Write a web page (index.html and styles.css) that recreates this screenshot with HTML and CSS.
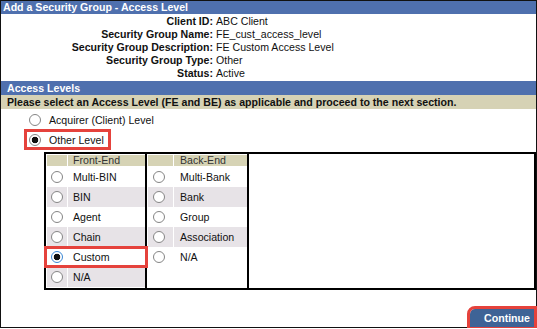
FILE: index.html
```html
<!DOCTYPE html>
<html>

<head>
	<meta charset='utf-8'>
	<title>Add a Security Group - Access Level</title>
	<meta name='viewport' content='width=device-width, initial-scale=1'>
	<link rel="stylesheet" href="styles.css">
</head>

<body>
	<div class="page">
		<div class="title">Add a Security Group - Access Level</div>

		<div class="details">
			<span class="label">Client ID:</span><span>ABC Client</span>
			<span class="label">Security Group Name:</span><span>FE_cust_access_level</span>
			<span class="label">Security Group Description:</span><span>FE Custom Access Level</span>
			<span class="label">Security Group Type:</span><span>Other</span>
			<span class="label">Status:</span><span>Active</span>
		</div>

		<div class="section">Access Levels</div>
		<div class="note">Please select an Access Level (FE and BE) as applicable and proceed to the next section.</div>

		<div class="levels">
			<label class="level"><input type="radio" name="level">Acquirer (Client) Level</label>
			<label class="level marked"><input type="radio" name="level" checked>Other Level</label>
		</div>

		<div class="matrix">
			<div class="side front">
				<div class="head"><span class="pick"></span><span class="name">Front-End</span></div>
				<label class="row"><span class="pick"><input type="radio" name="fe"></span><span class="name">Multi-BIN</span></label>
				<label class="row"><span class="pick"><input type="radio" name="fe"></span><span class="name">BIN</span></label>
				<label class="row"><span class="pick"><input type="radio" name="fe"></span><span class="name">Agent</span></label>
				<label class="row"><span class="pick"><input type="radio" name="fe"></span><span class="name">Chain</span></label>
				<label class="row marked focus"><span class="pick"><input type="radio" name="fe" checked></span><span class="name">Custom</span></label>
				<label class="row"><span class="pick"><input type="radio" name="fe"></span><span class="name">N/A</span></label>
			</div>
			<div class="side back">
				<div class="head"><span class="pick"></span><span class="name">Back-End</span></div>
				<label class="row"><span class="pick"><input type="radio" name="be"></span><span class="name">Multi-Bank</span></label>
				<label class="row"><span class="pick"><input type="radio" name="be"></span><span class="name">Bank</span></label>
				<label class="row"><span class="pick"><input type="radio" name="be"></span><span class="name">Group</span></label>
				<label class="row"><span class="pick"><input type="radio" name="be"></span><span class="name">Association</span></label>
				<label class="row"><span class="pick"><input type="radio" name="be"></span><span class="name">N/A</span></label>
			</div>
		</div>

		<div class="actions">
			<button class="continue" type="button">Continue</button>
		</div>
	</div>
</body>

</html>
```

FILE: styles.css
```css
* {
	box-sizing: border-box;
}

body {
	margin: 0;
	background: #fff;
	color: #111;
	font-family: "Liberation Sans", Arial, sans-serif;
	font-size: 10.6px;
}

.page {
	width: 537px;
	height: 328px;
	border: 1px solid #111;
}

.title,
.section {
	background: #4f70ae;
	color: #fff;
	font-weight: bold;
}

.title {
	height: 13px;
	line-height: 13px;
	padding-left: 2px;
}

.details {
	display: grid;
	grid-template-columns: 212px auto;
	column-gap: 3px;
	padding-top: 1px;
	line-height: 13px;
}

.details .label {
	text-align: right;
	font-weight: bold;
}

.section {
	margin-top: 1px;
	height: 14px;
	line-height: 14px;
	padding-left: 6px;
}

.note {
	height: 14px;
	line-height: 14px;
	padding-left: 6px;
	background: #d6d2b5;
	font-weight: bold;
}

/* radios */
input[type=radio] {
	appearance: none;
	-webkit-appearance: none;
	flex: none;
	width: 12px;
	height: 12px;
	margin: 0;
	border: 1px solid #858585;
	border-radius: 50%;
	background: #fff;
}

input[type=radio]:checked {
	background: radial-gradient(circle, #111 0 3px, #fff 3.6px);
}

.focus input[type=radio] {
	border-color: #3a86d4;
}

.levels {
	display: flex;
	flex-direction: column;
	align-items: flex-start;
	padding-top: 1px;
}

.level {
	display: flex;
	align-items: center;
	height: 19px;
	padding-left: 28px;
}

.level input {
	margin-right: 8px;
}

.level.marked {
	height: 21px;
	margin-left: 23px;
	padding: 0 4px 0 2px;
	border: 3px solid #e5423c;
}

/* front-end / back-end grid */
.matrix {
	display: flex;
	height: 138px;
	margin: 2px 0 0 43px;
	border: 2px solid #000;
}

.side {
	display: flex;
	flex-direction: column;
	padding: 1px 0 0 1px;
	border-right: 2px solid #000;
}

.front {
	width: 101px;
}

.back {
	width: 102px;
}

.head,
.row {
	display: flex;
	gap: 1px;
}

.head {
	height: 11px;
	line-height: 11px;
	margin-bottom: 1px;
	color: #333;
}

.head span {
	background: #d6d3b5;
}

.row {
	height: 20px;
}

.row:nth-child(odd) span {
	background: #e7e3e7;
}

.pick {
	display: flex;
	align-items: center;
	justify-content: center;
	width: 20px;
}

.name {
	display: flex;
	align-items: center;
	flex: 1;
	padding-left: 5px;
}

.back .pick {
	justify-content: flex-start;
	width: 25px;
	padding-left: 5px;
}

.back .name {
	padding-left: 6px;
}

.row.marked {
	position: relative;
}

.row.marked::after {
	content: "";
	position: absolute;
	top: -1px;
	bottom: -1px;
	left: -3px;
	right: -3px;
	border: 3px solid #e5423c;
}

.actions {
	display: flex;
	justify-content: flex-end;
	margin-top: 19px;
	padding-right: 2px;
}

.continue {
	width: 64px;
	height: 18px;
	padding: 0 0 0 10px;
	border: 0;
	border-radius: 5px 0 0 0;
	background: #3e6396;
	color: #fff;
	font: bold 10.6px "Liberation Sans", Arial, sans-serif;
	outline: 3px solid #e5423c;
}
```
